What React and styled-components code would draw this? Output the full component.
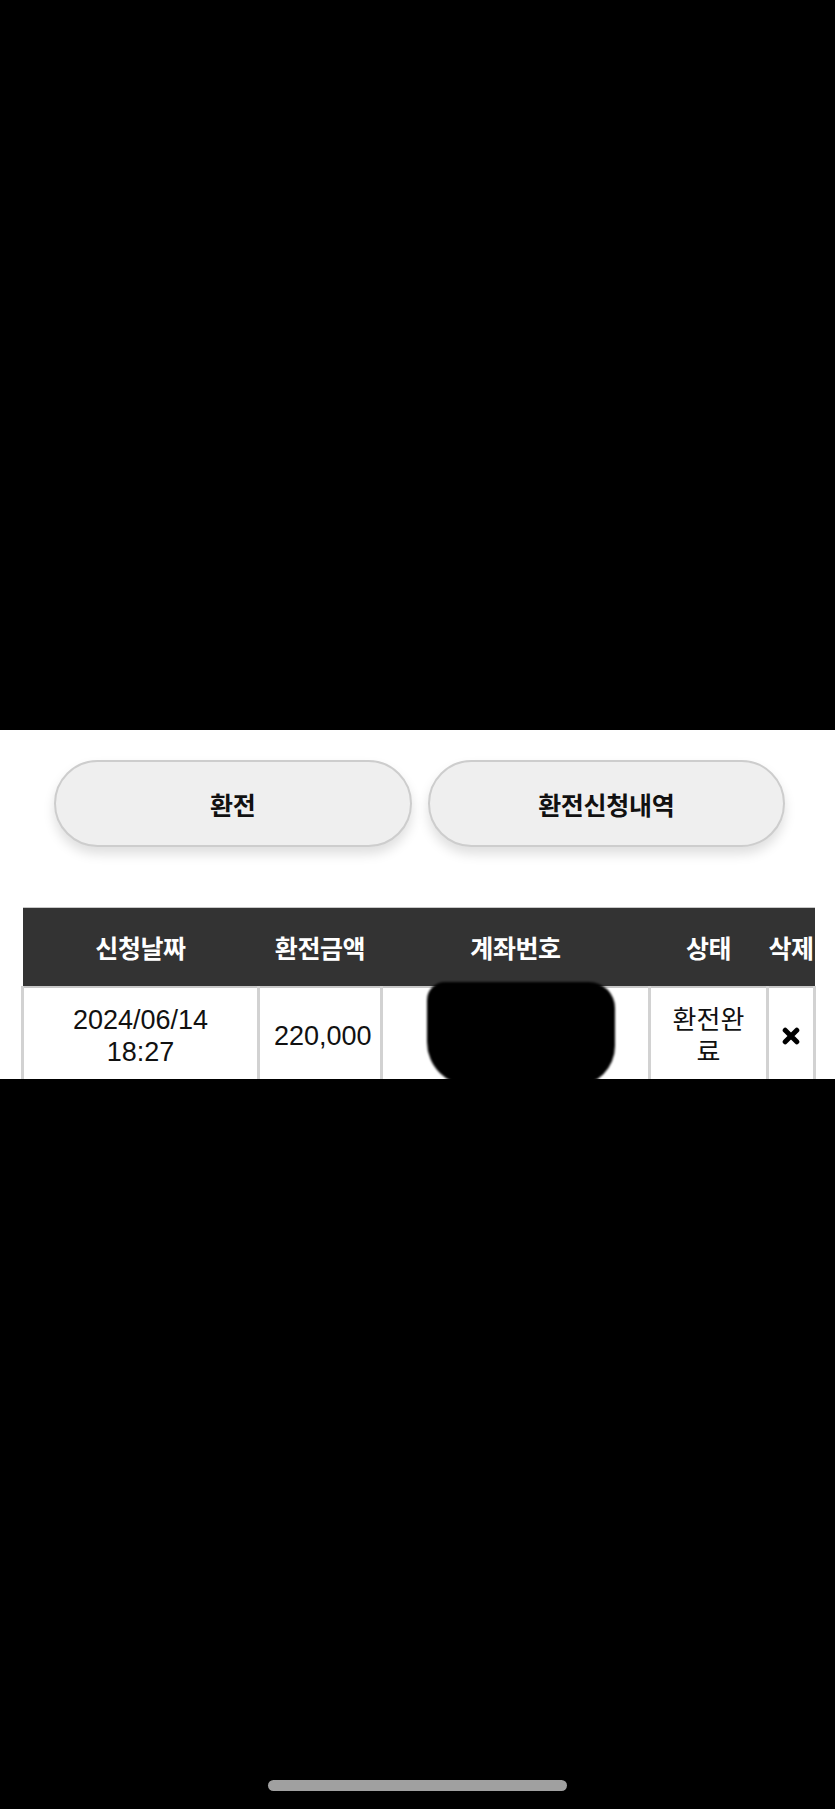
import React from "react";
import styled, { createGlobalStyle } from "styled-components";

const GlobalStyle = createGlobalStyle`
  html, body {
    margin: 0;
    padding: 0;
    background: #000;
  }
  body {
    font-family: "Liberation Sans", "Noto Sans CJK KR", sans-serif;
  }
  * { box-sizing: border-box; }
`;

const Screen = styled.div`
  width: 835px;
  height: 1809px;
  display: flex;
  flex-direction: column;
  background: #000;
  overflow: hidden;
`;

const TopBand = styled.div`
  height: 730px;
  flex: none;
  background: #000;
`;

const Sheet = styled.section`
  height: 349px;
  flex: none;
  background: #fff;
  overflow: hidden;
  padding-top: 30px;
`;

const ButtonRow = styled.div`
  display: flex;
  gap: 16px;
  padding: 0 50px 0 54px;
`;

const PillButton = styled.button`
  flex: 1;
  height: 87px;
  border-radius: 44px;
  border: 2px solid #cdcdcd;
  background: #efefef;
  box-shadow: 0 7px 12px rgba(0, 0, 0, 0.13);
  font-family: "Liberation Sans", "Noto Sans CJK KR", sans-serif;
  font-size: 25px;
  font-weight: 700;
  color: #111;
  letter-spacing: -0.3px;
  cursor: pointer;
`;

const Table = styled.table`
  margin: 60px 0 0 21px;
  width: 792px;
  table-layout: fixed;
  border-collapse: collapse;
`;

const HeadCell = styled.th`
  height: 79px;
  padding: 0;
  background: #333;
  border-top: 1px solid #c8c8c8;
  border-bottom: 2px solid #c8c8c8;
  color: #fff;
  font-size: 25px;
  font-weight: 700;
  text-align: center;
  vertical-align: middle;
  white-space: nowrap;
  letter-spacing: -0.4px;
`;

const Cell = styled.td`
  position: relative;
  padding: 16px ${(p) => (p.$tight ? 0 : 14)}px;
  border: 3px solid #d2d2d2;
  border-top: none;
  color: #111;
  font-size: ${(p) => (p.$hangul ? 26 : 27)}px;
  line-height: 32px;
  text-align: center;
  vertical-align: middle;
`;

const Redaction = styled.div`
  position: absolute;
  left: 44px;
  top: -6px;
  width: 188px;
  height: 104px;
  background: #000;
  border-radius: 18px 26px 40px 44px;
  filter: blur(1px);
`;

const DeleteIcon = () => (
  <svg width="18" height="18" viewBox="0 0 18 18" style={{ display: "block", margin: "0 auto" }}>
    <path d="M3.2 3.2 L14.8 14.8 M14.8 3.2 L3.2 14.8" stroke="#000" strokeWidth="5" strokeLinecap="round" />
  </svg>
);

const BottomBand = styled.div`
  flex: 1;
  background: #000;
  display: flex;
  justify-content: center;
  align-items: flex-end;
  padding-bottom: 18px;
`;

const HomeBar = styled.div`
  width: 299px;
  height: 11px;
  border-radius: 6px;
  background: #a0a0a0;
`;

const columns = [
  { key: "date", label: "신청날짜", width: 236 },
  { key: "amount", label: "환전금액", width: 123 },
  { key: "account", label: "계좌번호", width: 268 },
  { key: "status", label: "상태", width: 118 },
  { key: "del", label: "삭제", width: 47 },
];

const rows = [
  { date: "2024/06/14", time: "18:27", amount: "220,000", status: "환전완료" },
];

export default function App() {
  return (
    <>
      <GlobalStyle />
      <Screen>
        <TopBand />
        <Sheet>
          <ButtonRow>
            <PillButton>환전</PillButton>
            <PillButton>환전신청내역</PillButton>
          </ButtonRow>
          <Table>
            <colgroup>
              {columns.map((c) => (
                <col key={c.key} style={{ width: c.width }} />
              ))}
            </colgroup>
            <thead>
              <tr>
                {columns.map((c) => (
                  <HeadCell key={c.key}>{c.label}</HeadCell>
                ))}
              </tr>
            </thead>
            <tbody>
              {rows.map((r, i) => (
                <tr key={i}>
                  <Cell>
                    {r.date}
                    <br />
                    {r.time}
                  </Cell>
                  <Cell>{r.amount}</Cell>
                  <Cell>
                    <Redaction />
                  </Cell>
                  <Cell $hangul>{r.status}</Cell>
                  <Cell $tight>
                    <DeleteIcon />
                  </Cell>
                </tr>
              ))}
            </tbody>
          </Table>
        </Sheet>
        <BottomBand>
          <HomeBar />
        </BottomBand>
      </Screen>
    </>
  );
}
